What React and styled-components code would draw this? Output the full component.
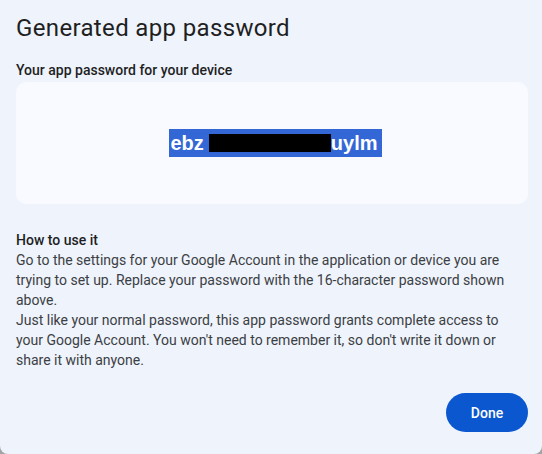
import React from "react";
import styled, { createGlobalStyle } from "styled-components";

const GlobalStyle = createGlobalStyle`
  html, body {
    margin: 0;
    padding: 0;
    background: #a3a3a3;
  }
  * {
    box-sizing: border-box;
  }
`;

const App = () => {
  return (
    <>
      <GlobalStyle />
      <Dialog>
        <Title>Generated app password</Title>
        <Label>Your app password for your device</Label>
        <PasswordBox>
          <Selection>
            ebz<Redacted />uylm
          </Selection>
        </PasswordBox>
        <HowTo>
          <HowTitle>How to use it</HowTitle>
          <HowText>
            Go to the settings for your Google Account in the application or device you are
            <br />
            trying to set up. Replace your password with the 16-character password shown
            <br />
            above.
            <br />
            Just like your normal password, this app password grants complete access to
            <br />
            your Google Account. You won't need to remember it, so don't write it down or
            <br />
            share it with anyone.
          </HowText>
        </HowTo>
        <Footer>
          <DoneButton>Done</DoneButton>
        </Footer>
      </Dialog>
    </>
  );
};

const Dialog = styled.div`
  width: 542px;
  height: 454px;
  background: #eef3fc;
  border-radius: 0 0 8px 8px;
  padding: 12px 14px 22px 16px;
  display: flex;
  flex-direction: column;
  font-family: Roboto, "Noto Sans", sans-serif;
  color: #1f1f1f;
`;

const Title = styled.div`
  font-size: 24px;
  line-height: 32px;
  font-weight: 400;
  letter-spacing: 0.35px;
  color: #1f1f1f;
`;

const Label = styled.div`
  margin-top: 16px;
  font-size: 14px;
  line-height: 20px;
  font-weight: 500;
  color: #1f1f1f;
`;

const PasswordBox = styled.div`
  margin-top: 2px;
  height: 122px;
  background: #f8faff;
  border-radius: 10px;
  display: flex;
  align-items: center;
  justify-content: center;
`;

const Selection = styled.span`
  display: inline-flex;
  align-items: center;
  height: 28px;
  padding: 0 4px 0 1px;
  margin-left: 7px;
  background: #3367d6;
  color: #ffffff;
  font-family: "Liberation Sans", Arial, sans-serif;
  font-weight: 700;
  font-size: 20px;
  line-height: 28px;
`;

const Redacted = styled.span`
  display: inline-block;
  width: 122px;
  height: 18px;
  margin-left: 5px;
  background: #000000;
`;

const HowTo = styled.div`
  margin-top: 26px;
`;

const HowTitle = styled.div`
  font-size: 14px;
  line-height: 20px;
  font-weight: 500;
  color: #1f1f1f;
`;

const HowText = styled.div`
  font-size: 14px;
  line-height: 20px;
  color: #3c4043;
  white-space: nowrap;
`;

const Footer = styled.div`
  margin-top: auto;
  display: flex;
  justify-content: flex-end;
`;

const DoneButton = styled.button`
  width: 82px;
  height: 39px;
  border: none;
  border-radius: 20px;
  background: #0b57d0;
  color: #ffffff;
  font-family: Roboto, "Noto Sans", sans-serif;
  font-size: 14px;
  font-weight: 500;
  cursor: pointer;
`;

export default App;
